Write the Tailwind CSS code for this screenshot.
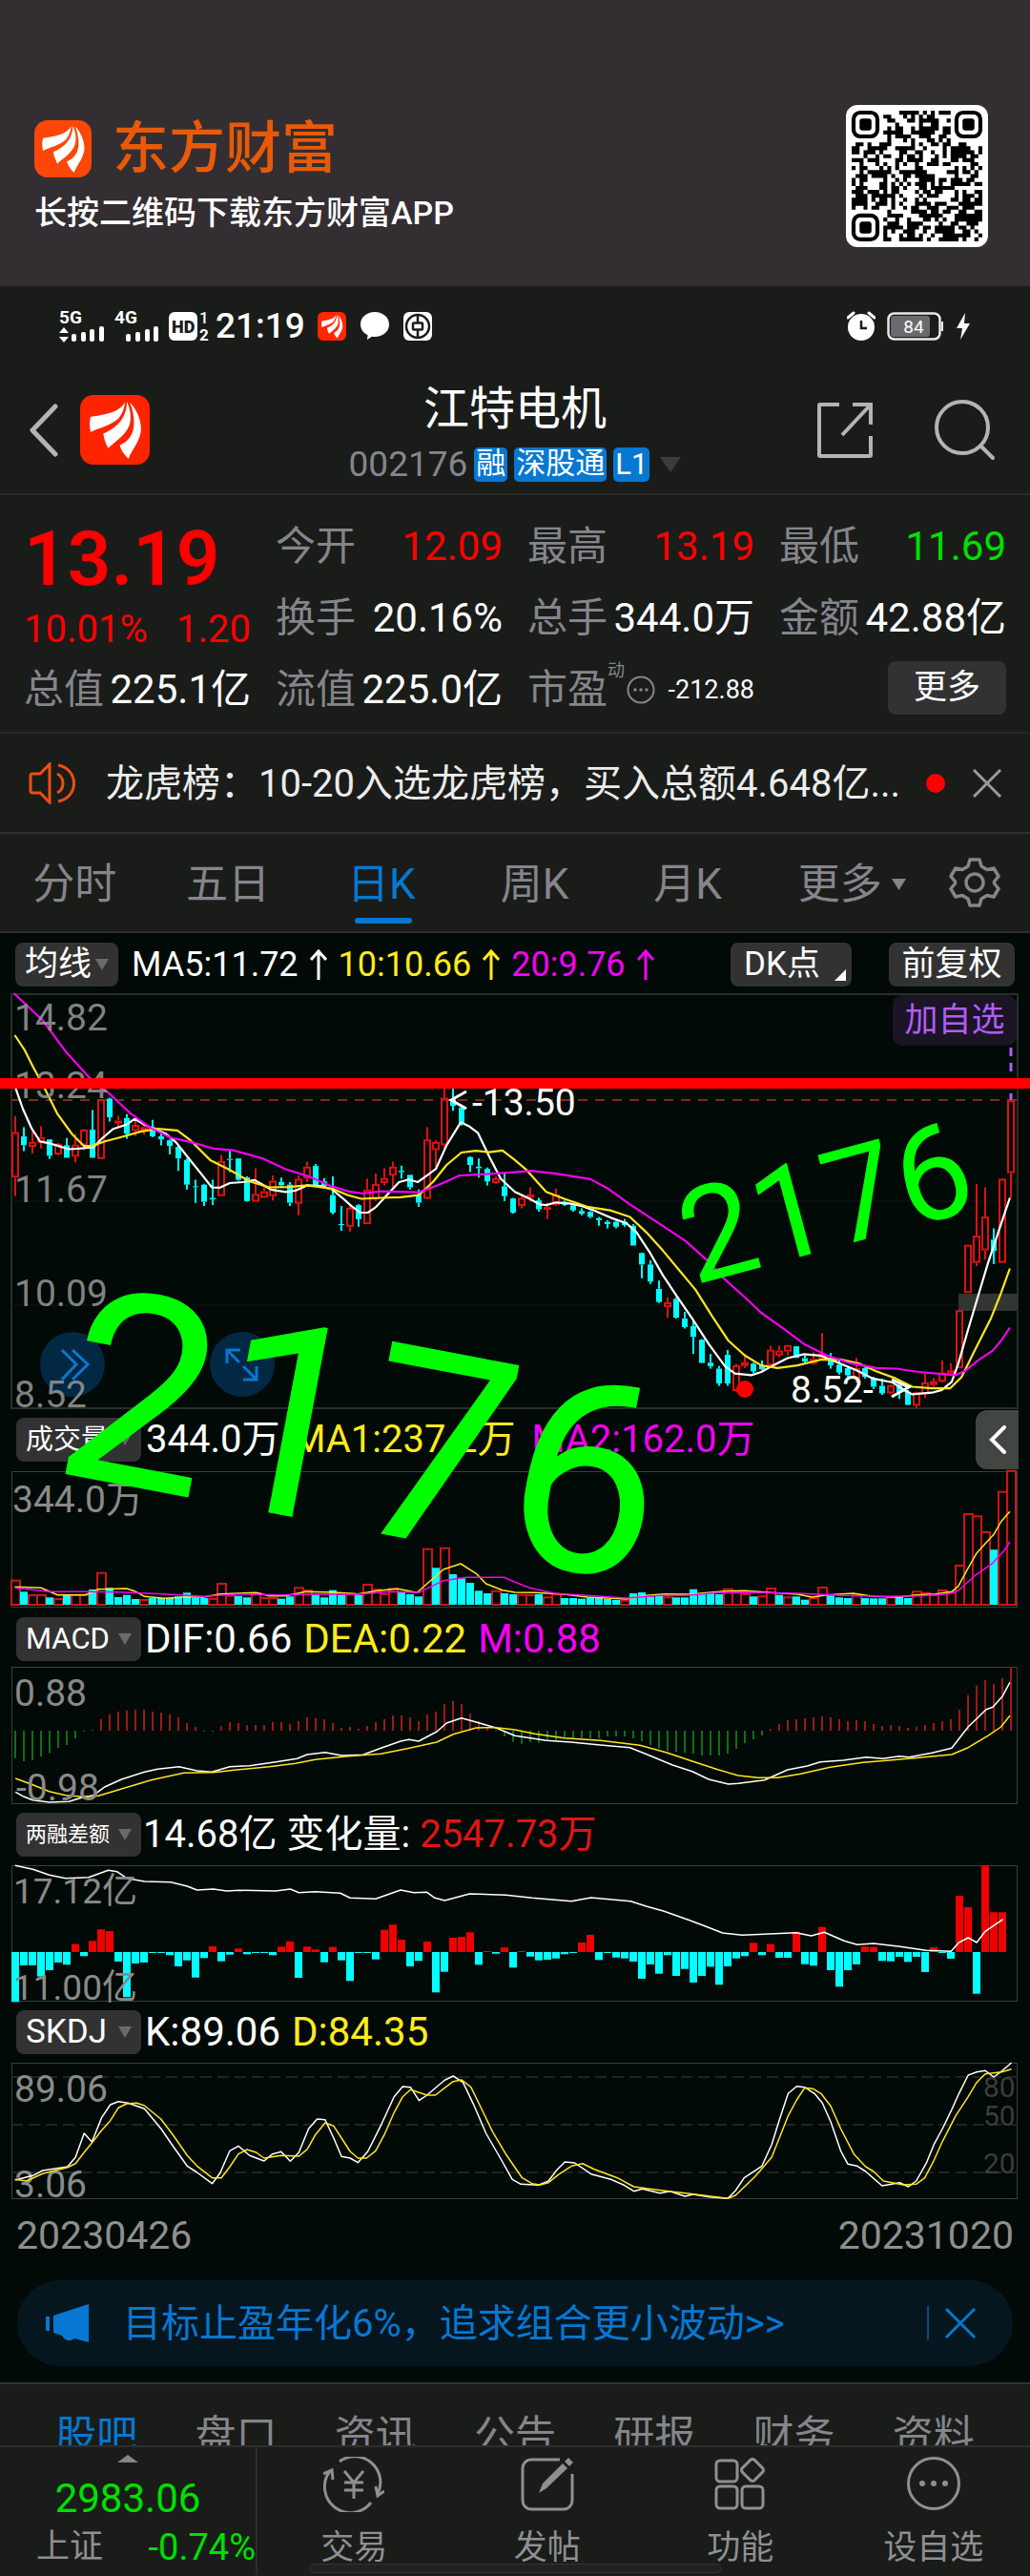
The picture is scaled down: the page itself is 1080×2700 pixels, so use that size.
<!DOCTYPE html>
<html lang="zh">
<head>
  <meta charset="UTF-8" />
  <meta name="viewport" content="width=device-width,initial-scale=1.0" />
  <title>江特电机 002176 · 东方财富</title>
  <script src="https://cdn.jsdelivr.net/npm/@tailwindcss/browser@4"></script>
</head>
<body class="bg-[#1a1c1a] text-white font-['Roboto','Noto_Sans_CJK_SC',sans-serif] overflow-x-hidden">
  <svg class="hidden">
    <symbol id="petals" viewBox="0 0 72 72">
      <path d="M46.500 7C43 15 33 20 11 22.500C9.500 27 9.500 33 11 38.500C19 34 32 32 40 24C44 19 46 13 46.500 7z" fill="#fff"/>
      <path d="M48.500 7C48 23 40 33 24 40C24.500 45 26.500 50 29 55C37 47 47 42 51 31C54 22 51 13 48.500 7z" fill="#fff"/>
      <path d="M51.500 8C57 22 57 36 52 43C49 48 45 50 41 52C42.500 58 46 62 50 66C53 57 61 50 63 37C63.500 26 58 14 51.500 8z" fill="#fff"/>
    </symbol>
  </svg>

  <!-- 品牌区 -->
  <header class="h-[300px] bg-[#332e32] flex justify-between items-start px-9 pt-[110px]">
    <div>
      <div class="flex items-center gap-[22px] pt-2">
        <svg class="w-[60px] h-[60px] rounded-[14px] bg-[#fb4708]"><use href="#petals"/></svg>
        <span class="text-[59px] leading-[76px] font-medium text-[#e85a08]">东方财富</span>
      </div>
      <p class="pt-[7px] text-[34px] leading-[44px] font-medium">长按二维码下载东方财富APP</p>
    </div>
    <svg id="qr" class="w-[149px] h-[149px] rounded-[12px] bg-white mr-2" viewBox="-6 -6 149 149" aria-label="二维码"></svg>
  </header>

  <!-- 状态栏 -->
  <div class="h-[84px] flex items-center justify-between pl-[62px] pr-[62px]">
    <div class="flex items-center">
      <svg class="w-[48px] h-[34px] overflow-visible" viewBox="0 0 48 34" fill="#fff">
        <text x="0" y="14" font-size="19" font-weight="700">5G</text>
        <path d="M5 18l5 6H0zM5 34l5-6H0z"/>
        <rect x="13" y="25" width="5" height="8" rx="2"/><rect x="23" y="23" width="5" height="10" rx="2"/><rect x="32" y="20" width="5" height="13" rx="2"/><rect x="42" y="17" width="5" height="16" rx="2"/>
      </svg>
      <svg class="w-[48px] h-[34px] ml-2.5 overflow-visible" viewBox="0 0 48 34" fill="#fff">
        <text x="0" y="14" font-size="19" font-weight="700">4G</text>
        <rect x="12" y="25" width="5" height="8" rx="2"/><rect x="22" y="23" width="5" height="10" rx="2"/><rect x="32" y="20" width="5" height="13" rx="2"/><rect x="41" y="17" width="5" height="16" rx="2"/>
      </svg>
      <svg class="w-[42px] h-[32px] ml-2 overflow-visible" viewBox="0 0 42 32" fill="#fff">
        <rect x="1" y="1" width="30" height="30" rx="6"/>
        <text x="4" y="23" font-size="18" font-weight="900" fill="#1a1c1a">HD</text>
        <text x="33" y="13" font-size="17" font-weight="500">1</text>
        <text x="33" y="31" font-size="17" font-weight="700">2</text>
      </svg>
      <span class="ml-2 text-[37px] leading-[44px] font-medium">21:19</span>
      <svg class="w-[30px] h-[30px] ml-[13px] rounded-[6px] bg-[#ff2800]"><use href="#petals"/></svg>
      <svg class="w-[30px] h-[30px] ml-[15px]" viewBox="0 0 30 30" fill="#fff"><path d="M15 0c8.500 0 15 5.500 15 13s-6.500 13-15 13c-1 0-2 0-3-.3L7 29l.5-4.800C3 22 0 18 0 13C0 5.500 6.500 0 15 0z"/></svg>
      <svg class="w-[30px] h-[30px] ml-[15px]" viewBox="0 0 30 30" fill="none" stroke="#1a1c1a" stroke-width="2.500"><rect width="30" height="30" rx="6" fill="#fff" stroke="none"/><circle cx="15" cy="15" r="12"/><rect x="10" y="11.500" width="10" height="7" rx="1"/><path d="M15 4v7M15 19v7"/></svg>
    </div>
    <div class="flex items-center">
      <svg class="w-[30px] h-[32px]" viewBox="0 0 30 32"><circle cx="15" cy="17" r="14" fill="#fff"/><path d="M1 7l6-5M29 7l-6-5" stroke="#fff" stroke-width="3" stroke-linecap="round"/><path d="M15 10v8h6" fill="none" stroke="#1a1c1a" stroke-width="2.500"/></svg>
      <svg class="w-[60px] h-[30px] ml-3" viewBox="0 0 60 30"><rect x="1.500" y="1.500" width="54" height="27" rx="6" fill="none" stroke="#e8e8e8" stroke-width="2.500"/><rect x="4" y="4" width="41" height="22" rx="3" fill="#6a6a6e"/><path d="M58 10v10" stroke="#e8e8e8" stroke-width="2"/><text x="28" y="22" font-size="19" text-anchor="middle" fill="#fff">84</text></svg>
      <svg class="w-[16px] h-[28px] ml-3" viewBox="0 0 16 28" fill="#fff"><path d="M10 0L1 16h6L5 28l10-17H9z"/></svg>
    </div>
  </div>

  <!-- 标题栏 -->
  <nav class="h-[135px] flex items-center justify-between pl-[30px] pr-[36px] border-b-2 border-[#2b2d2b]">
    <div class="flex items-center gap-[22px] w-[206px]">
      <button aria-label="返回"><svg class="w-[32px] h-[56px]" viewBox="0 0 32 56" fill="none" stroke="#b4b4b4" stroke-width="5" stroke-linecap="round" stroke-linejoin="round"><path d="M28 3L4 28L28 53"/></svg></button>
      <svg class="w-[73px] h-[73px] rounded-[14px] bg-[#ff2400]"><use href="#petals"/></svg>
    </div>
    <div class="flex flex-col items-center pt-[13px]">
      <h1 class="text-[48px] leading-[60px]">江特电机</h1>
      <div class="flex items-center gap-[7px] h-[56px]">
        <span class="text-[37px] text-[#85858b]">002176</span>
        <span class="h-[36px] px-[2px] rounded-[5px] bg-[#0778d2] text-[31px] leading-[34px]">融</span>
        <span class="h-[36px] px-[2px] rounded-[5px] bg-[#0778d2] text-[31px] leading-[34px]">深股通</span>
        <span class="h-[36px] px-[2px] rounded-[5px] bg-[#0778d2] text-[31px] leading-[36px]">L1</span>
        <svg class="w-[22px] h-[16px] ml-1" viewBox="0 0 22 16" fill="#3c3c3c"><path d="M0 0h22L11 16z"/></svg>
      </div>
    </div>
    <div class="flex items-center justify-end gap-[64px] w-[200px]">
      <button aria-label="分享"><svg class="w-[60px] h-[60px]" viewBox="0 0 60 60" fill="none" stroke="#b4b4b4" stroke-width="4"><path d="M24 3H4a1 1 0 0 0-1 1V56a1 1 0 0 0 1 1H56a1 1 0 0 0 1-1V36M38 3H57V24M57 3L27 35"/></svg></button>
      <button aria-label="搜索"><svg class="w-[64px] h-[64px]" viewBox="0 0 64 64" fill="none" stroke="#b4b4b4" stroke-width="4" stroke-linecap="round"><circle cx="29" cy="29" r="27"/><path d="M48 48L61 61"/></svg></button>
    </div>
  </nav>

  <!-- 行情数据 -->
  <section class="h-[250px] px-[25px] pt-[16px] grid grid-cols-4 gap-x-[26px] auto-rows-[75px] items-center text-[42px] leading-[60px] border-b-2 border-[#262826]">
    <div class="row-span-2 self-start text-[#ff0000]">
      <div class="pt-px text-[80px] leading-[100px] font-semibold">13.19</div>
      <div class="flex justify-between text-[40px] leading-[48px]"><span>10.01%</span><span>1.20</span></div>
    </div>
    <div class="flex justify-between"><span class="text-[#85858b]">今开</span><span class="text-[#ff0000]">12.09</span></div>
    <div class="flex justify-between"><span class="text-[#85858b]">最高</span><span class="text-[#ff0000]">13.19</span></div>
    <div class="flex justify-between"><span class="text-[#85858b]">最低</span><span class="text-[#00e000]">11.69</span></div>
    <div class="flex justify-between"><span class="text-[#85858b]">换手</span><span>20.16%</span></div>
    <div class="flex justify-between"><span class="text-[#85858b]">总手</span><span>344.0万</span></div>
    <div class="flex justify-between"><span class="text-[#85858b]">金额</span><span>42.88亿</span></div>
    <div class="flex justify-between"><span class="text-[#85858b]">总值</span><span>225.1亿</span></div>
    <div class="flex justify-between"><span class="text-[#85858b]">流值</span><span>225.0亿</span></div>
    <div class="flex items-center">
      <span class="text-[#85858b]">市盈</span>
      <span class="text-[18px] leading-5 text-[#85858b] self-start">动</span>
      <svg class="w-[30px] h-[30px] ml-[2px]" viewBox="0 0 30 30" fill="#85858b"><circle cx="15" cy="15" r="13.500" fill="none" stroke="#85858b" stroke-width="2"/><circle cx="9" cy="15" r="1.800"/><circle cx="15" cy="15" r="1.800"/><circle cx="21" cy="15" r="1.800"/></svg>
      <span class="ml-auto text-[27px]">-212.88</span>
    </div>
    <button class="justify-self-end w-[124px] h-[56px] mb-[3px] rounded-[8px] bg-[#323232] text-[35px] leading-[52px]">更多</button>
  </section>

  <!-- 公告条 -->
  <section class="h-[105px] px-[30px] flex items-center border-b-2 border-[#2e302e]">
    <svg class="w-[50px] h-[44px] shrink-0" viewBox="0 0 50 44" fill="none" stroke="#f04e10" stroke-width="3"><path d="M22 2v40L12 32H4a2 2 0 0 1-2-2V14a2 2 0 0 1 2-2H12zM30 12c8 4 8 16 0 20M31 3c22 4 22 34 0 38"/></svg>
    <a href="#news" class="ml-[31px] pt-[2px] flex-1 text-[40px] whitespace-nowrap text-[#ececec]">龙虎榜：10-20入选龙虎榜，买入总额4.648亿...</a>
    <span class="w-5 h-5 rounded-full bg-[#ff0000] mr-[29px] shrink-0"></span>
    <button aria-label="关闭公告" class="shrink-0"><svg class="w-[30px] h-[30px]" viewBox="0 0 30 30" stroke="#9a9a9a" stroke-width="3"><path d="M1 1L29 29M29 1L1 29"/></svg></button>
  </section>

  <!-- 周期切换 -->
  <nav class="h-[104px] pt-[4px] grid grid-cols-[repeat(5,161fr)_180fr_97fr] text-[44px] text-[#85858b] border-b-2 border-[#2e302e]">
    <button class="pr-1">分时</button>
    <button class="pr-1">五日</button>
    <button class="relative pr-1 text-[#0778d2]">日K<span class="absolute left-1/2 -translate-x-1/2 bottom-2 w-[60px] h-[6px] rounded bg-[#0778d2]"></span></button>
    <button class="pr-1">周K</button>
    <button class="pr-1">月K</button>
    <button class="flex items-center justify-center gap-2.5">更多<svg class="w-[15px] h-[12px]" viewBox="0 0 15 12" fill="#85858b"><path d="M0 0h15L7.500 12z"/></svg></button>
    <button aria-label="设置" class="flex items-center justify-center pr-5 pb-1"><svg class="w-[54px] h-[54px]" viewBox="0 0 54 54" fill="none" stroke="#85858b" stroke-width="3.500" stroke-linejoin="round"><path d="M22 3H32L34 10L40 13.500L47 12L52 20.500L47.500 26L47.500 28L52 33.500L47 42L40 40.500L34 44L32 51H22L20 44L14 40.500L7 42L2 33.500L6.500 28L6.500 26L2 20.500L7 12L14 13.500L20 10z"/><circle cx="27" cy="27" r="9"/></svg></button>
  </nav>

  <!-- K线图 -->
  <main class="relative bg-[#010a06] pb-[17px]">
    <div class="h-[63px] flex items-center pt-[2px] pl-4 pr-4 text-[36px] leading-[44px]">
      <button class="w-[108px] h-[46px] rounded-[8px] bg-[#323232] text-[35px] leading-[44px] flex items-center justify-center gap-1">均线<svg class="w-[14px] h-[12px]" viewBox="0 0 14 12" fill="#6a6a6a"><path d="M0 0h14L7 12z"/></svg></button>
      <div class="ml-[14px] flex items-center gap-3">
        <span>MA5:11.72</span>
        <svg class="w-[18px] h-[32px]" viewBox="0 0 18 32" fill="none" stroke="#fff" stroke-width="3"><path d="M9 32V2M1 11L9 2L17 11"/></svg>
        <span class="text-[#ffeb1e]">10:10.66</span>
        <svg class="w-[18px] h-[32px]" viewBox="0 0 18 32" fill="none" stroke="#ffeb1e" stroke-width="3"><path d="M9 32V2M1 11L9 2L17 11"/></svg>
        <span class="text-[#f500f5]">20:9.76</span>
        <svg class="w-[18px] h-[32px]" viewBox="0 0 18 32" fill="none" stroke="#f500f5" stroke-width="3"><path d="M9 32V2M1 11L9 2L17 11"/></svg>
      </div>
      <button class="relative ml-auto w-[127px] h-[46px] rounded-[8px] bg-[#323232] text-[35px] leading-[44px] text-left pl-[14px]">DK点<svg class="absolute right-[6px] bottom-[6px] w-3 h-3" viewBox="0 0 12 12" fill="#fff"><path d="M12 0V12H0z"/></svg></button>
      <button class="ml-[39px] w-[132px] h-[46px] rounded-[8px] bg-[#323232] text-[35px] leading-[44px]">前复权</button>
    </div>

    <div class="relative">
      <svg id="kline" class="block w-full overflow-visible" viewBox="0 0 1080 435">
        <g stroke="#2a2d2a" stroke-width="2" fill="none"><rect x="12" y="1" width="1055" height="434"/></g>
        <path d="M12 109H1067M12 218H1067M12 327H1067" stroke="#0e1612" stroke-width="1"/>
        <rect x="1005" y="315" width="62" height="18" fill="#333533"/>
        <path d="M12 112H1067" stroke="#a03a26" stroke-width="1.500" stroke-dasharray="10 8"/>
        <circle cx="76" cy="389" r="34" fill="#022844"/><path d="M65 374L80 389L65 405M76 374L92 389L76 405" fill="none" stroke="#0778d2" stroke-width="3"/>
        <circle cx="254" cy="389" r="34" fill="#022844"/><path d="M238 388V374H252M238 374L251 387M255 405H269V391M269 405L255 391" fill="none" stroke="#0778d2" stroke-width="3"/>
        <g class="plot"></g>
        <circle cx="781" cy="415" r="9" fill="#ff0000"/>
        <path d="M1060 57V112" stroke="#b05cf5" stroke-width="3" stroke-dasharray="9 7"/>
        <g font-size="39" fill="#999" fill-opacity=".85">
          <text x="15" y="39">14.82</text><text x="15" y="110">13.24</text><text x="15" y="219">11.67</text><text x="15" y="328">10.09</text><text x="15" y="434">8.52</text>
        </g>
        <g font-size="39" fill="#fff">
          <text x="495" y="128">-13.50</text><text x="829" y="429">8.52-</text>
          <path d="M489 103L473 112L489 121M935 405L953 413L935 423" fill="none" stroke="#fff" stroke-width="3"/>
        </g>
        <rect x="0" y="89" width="1080" height="11" fill="#ff0000"/>
      </svg>
      <button class="absolute right-[14px] top-0.5 w-[130px] h-[53px] rounded-[10px] bg-[#1a1424] text-[35px] leading-[50px] text-[#b05cf5]">加自选</button>
    </div>

    <div class="relative h-[66px] flex items-center pl-[17px] gap-[5px] text-[40px] leading-[48px]">
      <button class="w-[131px] h-[46px] rounded-[8px] bg-[#323232] text-[29px] leading-[44px] flex items-center justify-between px-[10px]">成交量<svg class="w-[14px] h-[12px]" viewBox="0 0 14 12" fill="#6a6a6a"><path d="M0 0h14L7 12z"/></svg></button>
      <span>344.0万</span><span class="ml-2 text-[#ffeb1e]">MA1:237.2万</span><span class="ml-3 text-[#f500f5]">MA2:162.0万</span>
      <button aria-label="展开" class="absolute right-3 top-0.5 w-[45px] h-[62px] rounded-l-[12px] bg-[#434543] flex items-center justify-center"><svg class="w-[18px] h-[30px]" viewBox="0 0 18 30" fill="none" stroke="#fff" stroke-width="4" stroke-linecap="round"><path d="M16 2L3 15L16 28"/></svg></button>
    </div>
    <svg id="vol" class="block w-full overflow-visible" viewBox="0 0 1080 147">
      <rect x="12.500" y=".5" width="1054" height="142" stroke="#3c3f3c" fill="none"/>
      <text x="13" y="43" font-size="39" fill="#8a8a8a">344.0万</text>
      <g class="plot"></g>
    </svg>

    <div class="h-[58px] flex items-center pl-[17px] gap-[4px] text-[42px] leading-[48px]">
      <button class="w-[131px] h-[46px] rounded-[8px] bg-[#323232] text-[31px] leading-[44px] flex items-center justify-between px-[10px]">MACD<svg class="w-[14px] h-[12px]" viewBox="0 0 14 12" fill="#6a6a6a"><path d="M0 0h14L7 12z"/></svg></button>
      <span>DIF:0.66</span><span class="ml-2 text-[#ffeb1e]">DEA:0.22</span><span class="ml-2 text-[#f500f5]">M:0.88</span>
    </div>
    <svg id="macd" class="block w-full overflow-visible" viewBox="0 0 1080 144">
      <rect x="12.500" y=".5" width="1054" height="143" stroke="#3c3f3c" fill="none"/>
      <g class="plot"></g>
      <g font-size="39" fill="#8a8a8a"><text x="15" y="41">0.88</text><text x="17" y="140">-0.98</text></g>
    </svg>

    <div class="h-[64px] flex items-center pl-[17px] gap-[2px] text-[40px] leading-[48px]">
      <button class="w-[131px] h-[46px] rounded-[8px] bg-[#323232] text-[22px] leading-[44px] flex items-center justify-between px-[10px]">两融差额<svg class="w-[14px] h-[12px]" viewBox="0 0 14 12" fill="#6a6a6a"><path d="M0 0h14L7 12z"/></svg></button>
      <span>14.68亿</span><span class="ml-2">变化量:</span><span class="ml-2 text-[#e01414]">2547.73万</span>
    </div>
    <svg id="margin" class="block w-full overflow-visible" viewBox="0 0 1080 143">
      <rect x="12.500" y=".5" width="1054" height="142" stroke="#3c3f3c" fill="none"/>
      <g class="plot"></g>
      <g font-size="37" fill="#8a8a8a"><text x="14" y="40">17.12亿</text><text x="14" y="141">11.00亿</text></g>
    </svg>

    <div class="h-[64px] flex items-center pl-[17px] gap-[4px] text-[42px] leading-[48px]">
      <button class="w-[131px] h-[46px] rounded-[8px] bg-[#323232] text-[35px] leading-[44px] flex items-center justify-between px-[10px]">SKDJ<svg class="w-[14px] h-[12px]" viewBox="0 0 14 12" fill="#6a6a6a"><path d="M0 0h14L7 12z"/></svg></button>
      <span>K:89.06</span><span class="ml-2 text-[#ffeb1e]">D:84.35</span>
    </div>
    <svg id="skdj" class="block w-full overflow-visible" viewBox="0 0 1080 143">
      <rect x="12.500" y=".5" width="1054" height="142" stroke="#3c3f3c" fill="none"/>
      <path d="M12 15H1067M12 65H1067M12 115H1067" stroke="#2c2f2c" stroke-width="1.500" stroke-dasharray="12 6"/>
      <g font-size="30" fill="#3a3d3a"><text x="1031" y="36">80</text><text x="1031" y="66">50</text><text x="1031" y="116">20</text></g>
      <g font-size="39" fill="#8a8a8a"><text x="15" y="41">89.06</text><text x="15" y="141">3.06</text></g>
      <g class="plot"></g>
    </svg>
    <div class="h-[85px] px-[17px] pt-[13px] flex justify-between text-[41px] leading-[50px] text-[#8f8f8f]"><span>20230426</span><span>20231020</span></div>

    <!-- 手写标注 -->
    <svg class="absolute inset-x-0 top-0 w-full overflow-visible pointer-events-none" viewBox="0 977 1080 700" fill="#00ff00">
      <text font-size="282" transform="translate(52 1541) rotate(10.7)">2176</text>
      <text font-size="138" transform="translate(728 1346) rotate(-15)">2176</text>
    </svg>

    <div class="mx-[18px] h-[90px] rounded-full bg-[#06161f] flex items-center pl-[30px] pr-[38px] text-[40px] text-[#0778d2]">
      <svg class="w-[46px] h-[40px]" viewBox="0 0 46 40" fill="#0778d2"><path d="M0 13h4v15H0zM8 12L45 0V40L30 36C26 40 19 38 17 33L8 30z"/></svg>
      <a href="#fund" class="ml-[35px] pt-[2px] whitespace-nowrap">目标止盈年化6%，追求组合更小波动&gt;&gt;</a>
      <span class="ml-auto w-0.5 h-[36px] bg-[#0a4a80]"></span>
      <button aria-label="关闭广告" class="ml-4"><svg class="w-[34px] h-[34px]" viewBox="0 0 34 34" stroke="#0778d2" stroke-width="3"><path d="M2 2L32 32M32 2L2 32"/></svg></button>
    </div>
  </main>

  <!-- 底部资讯栏 -->
  <nav class="h-[66px] overflow-hidden border-t-2 border-[#333533] px-[28px] pt-[22px] grid grid-cols-7 text-center text-[43px] leading-[64px] text-[#85858b]">
    <a href="#bar" class="text-[#0778d2]">股吧</a><a href="#pan">盘口</a><a href="#info">资讯</a><a href="#notice">公告</a><a href="#report">研报</a><a href="#finance">财务</a><a href="#data">资料</a>
  </nav>
  <footer class="relative h-[136px] border-t-2 border-[#2c2e2c] flex text-[35px] leading-[44px] text-[#8f8f93]">
    <div class="w-1/4 border-r-2 border-[#2c2e2c]">
      <svg class="mx-auto mt-2 w-[22px] h-[8px]" viewBox="0 0 22 8" fill="#85858b"><path d="M0 8L11 0L22 8z"/></svg>
      <div class="mt-[13px] text-center text-[42px] leading-[50px] text-[#00e000]">2983.06</div>
      <div class="mt-1 pl-[38px] flex justify-between"><span>上证</span><span class="text-[38px] text-[#00e000]">-0.74%</span></div>
    </div>
    <div class="flex-1 grid grid-cols-4">
      <button class="flex flex-col items-center pt-[10px]"><svg class="w-[64px] h-[58px]" viewBox="0 0 64 58" fill="none" stroke="#8f8f93" stroke-width="3"><path d="M17 5A27 27 0 0 1 57 39M50 48A27 27 0 0 1 7 15M0 18L9 14L10 24M64 36L57 41L55 31M22 15L32 27L42 15M32 27V44M22 27H42M22 35H42"/></svg><span class="mt-4">交易</span></button>
      <button class="flex flex-col items-center pt-[10px]"><svg class="w-[58px] h-[58px]" viewBox="0 0 58 58" fill="none" stroke="#8f8f93" stroke-width="3"><path d="M42 3H12A9 9 0 0 0 3 12V46A9 9 0 0 0 12 55H46A9 9 0 0 0 55 46V18"/><path d="M20 38L24 28L45 7L50 12L28 33zM47 5L51 1L56 6L52 10z" fill="#8f8f93" stroke="none"/></svg><span class="mt-4">发帖</span></button>
      <button class="flex flex-col items-center pt-[10px]"><svg class="w-[58px] h-[58px]" viewBox="0 0 58 58" fill="none" stroke="#8f8f93" stroke-width="3"><rect x="4" y="4" width="22" height="22" rx="4"/><rect x="4" y="31" width="22" height="23" rx="4"/><rect x="31" y="31" width="22" height="23" rx="4"/><rect x="33" y="5" width="18" height="18" rx="3" transform="rotate(45 42 14)"/></svg><span class="mt-4">功能</span></button>
      <button class="flex flex-col items-center pt-[10px]"><svg class="w-[58px] h-[58px]" viewBox="0 0 58 58" fill="#8f8f93"><circle cx="29" cy="28" r="26.500" fill="none" stroke="#8f8f93" stroke-width="3"/><circle cx="17" cy="28" r="3"/><circle cx="29" cy="28" r="3"/><circle cx="41" cy="28" r="3"/></svg><span class="mt-4">设自选</span></button>
    </div>
    <div class="absolute left-[30%] right-[30%] bottom-[2px] h-[10px] rounded-full bg-[#202120] border border-[#333]"></div>
  </footer>

  <script>
    const RED = '#e01010', CYAN = '#00ffff', YELLOW = '#ffe61e', PINK = '#f500f5';
    const plot = id => document.querySelector('#' + id + ' .plot');
    const cx = i => 16 + 9 * i;

    // s 为 "x,y x,y ..."，kx/ky 是数据倍率，oy 是纵向偏移
    function line(id, s, color, kx, ky, oy, w) {
      const pts = s.trim().split(/\s+/).map(p => {
        const [x, y] = p.split(',').map(Number);
        return (x / kx).toFixed(1) + ',' + (y / ky - oy).toFixed(1);
      }).join(' ');
      plot(id).innerHTML += `<polyline points="${pts}" fill="none" stroke="${color}" stroke-width="${w}" stroke-linejoin="round"/>`;
    }
    function rect(x, y, w, h, fill, stroke) {
      return `<rect x="${x}" y="${y.toFixed(1)}" width="${w}" height="${Math.max(h, 1).toFixed(1)}" fill="${fill}"` + (stroke ? ` stroke="${stroke}" stroke-width="2"` : '') + '/>';
    }

    // 蜡烛: 颜色 最高 实体上 实体下 最低
    const candles = `r552,600,738,795 c585,613,640,658 r598,630,645,665 r582,615,632,650 c622,622,672,682 r632,635,668,670 c618,640,678,678 r605,638,675,692 r590,592,640,655 c533,592,678,678
    r500,500,682,682 c495,498,555,568 r550,565,572,588 c545,557,605,620 r565,578,596,612 r570,585,592,608 c563,585,613,616 c600,613,622,640 c622,625,642,668 c640,645,680,718
    c680,685,760,775 c745,765,768,815 c757,760,812,825 c745,800,805,822 r670,688,795,795 c657,682,685,722 c680,680,745,748 c735,738,810,812 r710,788,812,812 r768,780,800,800
    r732,748,795,808 c738,752,762,768 c752,760,815,825 r732,742,818,853 r690,705,740,752 c697,703,762,765 c740,750,765,768 c735,792,845,850 c825,880,883,900 r825,830,888,903
    c820,822,865,888 r742,775,880,880 r726,758,805,810 r710,740,755,762 r690,705,732,768 c702,718,722,742 c730,730,768,775 c775,790,815,828 r585,622,803,805 r625,630,655,705
    r465,495,640,655 c465,500,520,535 c525,525,575,580 c673,676,700,722 c680,705,710,738 c708,712,750,762 r735,740,755,758 c725,765,795,810 c800,802,845,848 r788,800,825,833
    r768,790,800,812 c800,808,835,842 r815,828,835,865 r772,790,822,825 c808,812,822,825 c820,823,838,842 c832,840,848,853 c840,843,858,862 c858,862,868,885 c868,873,880,893
    c868,873,888,893 c865,873,883,888 c880,885,945,945 c966,968,1003,1045 c990,1003,1055,1062 c1052,1077,1117,1120 r1103,1118,1133,1165 c1103,1108,1165,1168 c1147,1167,1193,1198 c1172,1190,1223,1275
    c1230,1232,1303,1303 c1275,1302,1313,1320 c1312,1320,1365,1372 c1263,1278,1365,1372 r1305,1310,1388,1390 r1275,1300,1312,1318 c1302,1305,1328,1333 c1295,1310,1322,1325 r1250,1262,1310,1310 r1250,1265,1280,1285
    r1247,1248,1268,1280 c1252,1252,1287,1287 c1280,1288,1298,1303 r1270,1290,1305,1308 r1212,1275,1290,1292 c1272,1290,1310,1320 c1295,1308,1332,1338 c1312,1318,1340,1345 r1287,1318,1350,1362 c1315,1318,1345,1350
    c1345,1350,1375,1382 c1350,1372,1395,1400 r1368,1370,1395,1398 c1360,1368,1392,1412 c1385,1390,1430,1432 r1390,1392,1433,1440 r1335,1362,1398,1410 r1348,1358,1370,1375 r1295,1332,1360,1362 r1303,1325,1335,1338
    r1140,1142,1318,1318 r943,943,1090,1090 r758,915,998,1008 r768,857,960,988 c893,927,962,1002 r740,742,998,998 r503,503,725,800`;
    plot('kline').innerHTML = candles.trim().split(/\s+/).map((c, i) => {
      const [h, t, b, l] = c.slice(1).split(',').map(v => v / 2.904 - 61);
      const x = cx(i), red = c[0] === 'r', col = red ? RED : CYAN;
      const wick = `<path d="M${x} ${h}V${t}M${x} ${b}V${l}" stroke="${col}" stroke-width="2"/>`;
      return wick + (red ? rect(x - 3, t + 1, 6, b - t - 2, 'none', col) : rect(x - 3, t, 6, b - t, col));
    }).join('');
    line('kline', `47,465 70,530 97,590 122,628 150,634 180,643 210,652 240,650 285,646 310,620 345,590 385,577 410,560 440,577 475,593 505,605 535,630 575,680 615,730 645,768 670,769 700,755 740,752 775,746 800,760 825,775 870,782 900,778 935,762 975,764 1010,774 1040,798 1070,825 1098,845 1120,845 1145,828 1175,795 1215,752 1245,744 1272,752 1300,732 1327,712 1360,640 1403,570 1430,583 1455,602 1490,675 1525,742 1568,782
    1613,803 1643,820 1663,822 1693,814 1733,817 1773,825 1808,838 1858,860 1908,878 1938,905 1978,965 2018,1035 2058,1095 2108,1168 2158,1245 2208,1313 2238,1335 2288,1340 2318,1330 2358,1308 2398,1288 2448,1276 2498,1280 2548,1300 2608,1325 2658,1350 2718,1362 2758,1388 2778,1398 2838,1393 2868,1385 2898,1360 2918,1305 2948,1200 2978,1100 3008,1000 3043,895 3075,800`, '#fff', 2.904, 2.904, 61, 2.2);
    line('kline', `45,305 75,350 100,400 130,455 175,545 220,607 255,642 280,642 320,628 370,615 430,598 480,590 540,595 580,625 640,685 700,715 760,750 820,768 880,767 935,762 1010,772 1060,792 1100,803 1160,800 1220,798 1275,792 1320,750 1360,700 1405,662 1450,657 1490,661 1530,656 1568,685
    1603,715 1663,782 1718,803 1788,827 1858,838 1918,858 1968,905 2018,960 2068,1020 2118,1080 2168,1160 2218,1235 2268,1280 2318,1310 2368,1318 2428,1310 2498,1293 2558,1292 2618,1305 2668,1328 2728,1350 2778,1375 2838,1380 2893,1380 2928,1345 2968,1265 3018,1165 3048,1090 3075,1015`, YELLOW, 2.904, 2.904, 61, 2.2);
    line('kline', `43,178 130,260 200,355 270,432 330,480 400,545 460,588 520,617 580,630 650,650 710,655 800,680 870,713 940,735 1010,765 1060,780 1105,787 1160,780 1275,783 1330,763 1400,732 1480,728 1568,722
    1618,718 1698,727 1798,743 1848,770 1918,820 2018,885 2088,932 2153,990 2198,1040 2268,1103 2318,1150 2388,1200 2448,1245 2518,1280 2588,1303 2668,1318 2728,1320 2798,1330 2908,1340 2938,1327 2978,1295 3023,1265 3048,1235 3075,1195`, PINK, 2.904, 2.904, 61, 2.2);

    // 成交量
    const vols = `r527 c565 r573 r573 c583 r585 c575 r572 r572 c558 r503 c553 c582 c575 c588 r588 c585 c585 c585 c580 c568 c585 c585 r585 r537 r575 c578 c583 r567 r582 r582 c587 c580 r550 r558 c575 c583 c560 c575 r568 c576 r540 r555 r570 r553 c565 c573 c580 r428 c490 r425 c510 c523 c537 c562 c570 r560 c570 c573
    r572 r573 c573 r580 r570 c585 c585 c587 c583 c585 c588 c591 r590 c570 c567 c580 c572 r580 c583 c583 c557 c572 c570 c573 r554 r560 r570 c580 r577 r552 c575 r580 c580 c590 r583 r549 c577 c583 c585 r572 c585 c586 c586 r580 c582 c585 r562 r566 r573 r558 r565 r480 r318 r325 r375 c433 r248 r182`;
    plot('vol').innerHTML = vols.trim().split(/\s+/).map((c, i) => {
      const y = c.slice(1) / 3 - 62;
      return c[0] === 'r' ? rect(cx(i) - 4, y + 1, 9, 139 - y, 'none', '#d01414') : rect(cx(i) - 4, y, 8, 140 - y, CYAN);
    }).join('');
    line('vol', `45,550 125,553 175,575 260,575 300,557 385,555 410,563 440,580 500,586 560,582 620,582 670,572 780,568 820,578 870,578 930,565 1020,567 1090,572 1150,562 1210,556 1270,568 1300,540 1350,495 1403,477 1450,508 1480,540 1530,560 1568,567
    1628,568 1718,573 1788,582 1908,588 1968,577 2028,572 2098,573 2208,563 2268,562 2348,568 2428,573 2473,582 2518,575 2598,570 2658,580 2738,582 2788,575 2848,572 2898,565 2918,548 2943,500 2973,445 3003,410 3026,385 3048,345 3075,313`, YELLOW, 2.904, 3, 62, 1.5);
    line('vol', `45,553 150,565 260,565 360,566 500,572 620,580 720,573 860,575 960,572 1090,573 1190,565 1275,568 1350,530 1420,520 1535,520 1568,535 1613,553 1688,570 1788,577 1908,585 2008,577 2088,577 2188,568 2268,567 2428,570 2568,577 2688,580 2798,578 2888,572 2918,562 2968,515 3023,475 3058,435 3075,408`, PINK, 2.904, 3, 62, 1.5);

    // MACD 柱
    const hist = [1088,1098,1095,1083,1073,1056,1047,1026,1004,999,966,950,942,938,936,936,942,945,951,960,978,990,1002,1004,988,975,978,985,984,984,975,975,980,972,960,962,966,978,993,990,996,987,975,966,954,954,960,972,951,942,918,908,918,948,972,990,1005,1020,1037,1043,1038,1040,1035,1032,1026,1026,1026,1026,1026,1020,1020,1020,1026,1035,1047,1058,1065,1068,1072,1074,1080,1080,1080,1075,1059,1041,1029,1017,996,981,969,966,963,960,957,960,966,972,969,972,981,987,984,987,993,990,984,978,972,966,936,890,860,843,855,837,802];
    plot('macd').innerHTML = hist.map((v, i) => {
      const y = v / 3 - 267, z = 67;
      return y < z ? rect(cx(i) - 1, y, 2, z - y, '#a01818') : rect(cx(i) - 1, z, 2, y - z, '#0c7016');
    }).join('');
    line('macd', `47,1195 70,1208 100,1220 150,1227 210,1225 250,1212 285,1205 320,1178 370,1155 440,1132 480,1123 545,1115 600,1128 645,1132 700,1115 760,1112 840,1100 905,1090 935,1077 990,1070 1040,1080 1105,1078 1160,1057 1220,1035 1245,1030 1275,1035 1330,1005 1360,978 1405,962 1450,975 1510,993 1568,1018
    1663,1033 1738,1038 1828,1047 1918,1055 1978,1080 2048,1110 2108,1130 2158,1155 2218,1170 2248,1168 2328,1157 2398,1125 2458,1113 2498,1100 2568,1095 2638,1085 2688,1090 2738,1082 2768,1085 2838,1072 2898,1057 2948,990 3003,935 3023,928 3053,893 3075,850`, '#fff', 2.904, 3, 267, 1.5);
    line('macd', `47,1152 100,1172 150,1193 200,1205 255,1210 300,1207 370,1185 460,1157 560,1135 650,1133 720,1125 820,1115 900,1105 960,1093 1060,1082 1160,1075 1240,1058 1330,1038 1380,1013 1450,993 1510,992 1568,999
    1628,1012 1718,1025 1828,1033 1948,1048 2028,1070 2108,1098 2188,1125 2248,1143 2308,1150 2368,1150 2438,1138 2528,1117 2628,1102 2708,1095 2798,1087 2898,1077 2948,1055 3008,1018 3048,990 3075,955`, YELLOW, 2.904, 3, 267, 1.5);

    // 两融差额
    const margin = [592,477,477,512,492,468,475,410,448,400,364,369,465,577,471,468,438,438,445,480,461,515,454,417,464,443,424,442,438,438,445,418,402,516,418,427,467,419,461,526,438,438,458,365,349,396,480,463,402,562,497,390,387,373,475,432,440,421,484,432,449,461,459,455,442,438,405,381,460,438,452,455,465,519,474,503,445,510,488,531,510,481,538,480,455,448,406,445,410,453,453,371,473,478,356,492,544,492,474,418,419,463,464,450,466,450,498,420,438,456,258,294,566,162,310,310];
    plot('margin').innerHTML = margin.map((v, i) => {
      const y = v / 3 - 54, z = 91;
      return y < z ? rect(cx(i) - 4, y, 8, z - y, '#f00000') : rect(cx(i) - 4, z, 8, y - z, CYAN);
    }).join('');
    line('margin', `23,163 50,175 75,193 100,203 135,200 165,178 178,182 193,203 220,213 260,215 285,228 300,240 325,237 345,243 365,241 420,243 442,237 455,248 480,245 518,250 533,265 572,268 610,240 630,248 650,247 662,265 677,273 715,252 770,256 810,265 870,275 900,264 960,275 985,292 1010,306 1050,335 1075,355 1100,375 1130,382 1180,377 1212,374 1235,384 1255,373 1285,400 1305,412 1330,408 1370,418 1410,430 1448,433 1460,405 1474,390 1487,405 1500,370 1527,332`, '#fff', 1.452, 3, 54, 1.5);

    // SKDJ
    line('skdj', `23,1152 50,1138 65,1122 103,1110 115,1080 128,1005 140,1032 155,955 168,915 180,905 195,910 220,928 245,990 265,1050 285,1108 300,1128 323,1163 335,1130 350,1060 363,1045 380,1075 402,1092 415,1070 428,1063 442,1093 455,1065 470,990 483,960 495,962 508,1020 520,1078 533,1083 545,1097 560,1062 580,980 600,890 613,858 625,860 638,902 650,885 677,838 690,825 705,845 720,910 740,1005 765,1095 780,1150 793,1165 820,1168 835,1155 848,1120 860,1095 875,1098 900,1133 930,1150 950,1168 965,1187 978,1180 1005,1193 1020,1187 1043,1203 1055,1197 1080,1205 1108,1210 1120,1185 1133,1145 1160,1108 1175,1040 1187,960 1200,880 1213,857 1225,860 1240,880 1252,910 1265,970 1280,1060 1291,1102 1305,1108 1318,1125 1343,1170 1370,1160 1383,1173 1395,1155 1410,1100 1422,1040 1435,990 1448,935 1460,880 1474,822 1487,812 1500,808 1513,828 1526,808 1540,783`, '#fff', 1.452, 3, 261, 1.5);
    line('skdj', `23,1150 40,1155 65,1132 103,1112 115,1100 128,1065 140,1035 155,995 168,965 180,925 193,912 208,910 220,918 245,960 265,1015 285,1075 300,1108 323,1145 337,1145 350,1110 363,1070 376,1056 390,1065 402,1083 428,1075 455,1077 468,1055 480,1010 495,972 508,982 520,1020 533,1062 545,1083 558,1083 572,1060 585,1010 600,940 613,890 625,868 650,885 663,885 677,862 690,842 703,837 717,860 730,915 750,1000 770,1070 795,1145 810,1163 822,1167 835,1160 850,1135 870,1108 887,1100 905,1118 940,1145 965,1173 1000,1183 1050,1195 1108,1210 1120,1200 1150,1140 1175,1080 1200,950 1213,900 1225,862 1238,865 1250,880 1265,920 1280,990 1300,1070 1318,1110 1330,1125 1345,1155 1375,1167 1395,1165 1408,1145 1422,1090 1435,1030 1455,950 1474,890 1487,845 1500,818 1525,812 1540,803`, YELLOW, 1.452, 3, 261, 1.5);

    // 二维码 33x33
    let seed = 2176, qr = '';
    const m = 137 / 33;
    for (let r = 0; r < 33; r++) {
      for (let c = 0; c < 33; c++) {
        seed = (seed * 1103515245 + 12345) % 2147483648;
        const corner = (r < 8 && (c < 8 || c > 24)) || (r > 24 && c < 8);
        if (!corner && seed / 2147483648 < 0.55) qr += `M${(c * m).toFixed(2)} ${(r * m).toFixed(2)}h${m.toFixed(2)}v${m.toFixed(2)}h-${m.toFixed(2)}z`;
      }
    }
    document.getElementById('qr').innerHTML = `<path d="${qr}"/>` + [[0, 0], [26, 0], [0, 26]].map(([c, r]) =>
      `<rect x="${c * m + 2}" y="${r * m + 2}" width="25" height="25" rx="7" fill="none" stroke="#000" stroke-width="4.2"/><rect x="${c * m + 8.3}" y="${r * m + 8.3}" width="12.500" height="12.500" rx="3"/>`).join('');
  </script>
</body>
</html>
